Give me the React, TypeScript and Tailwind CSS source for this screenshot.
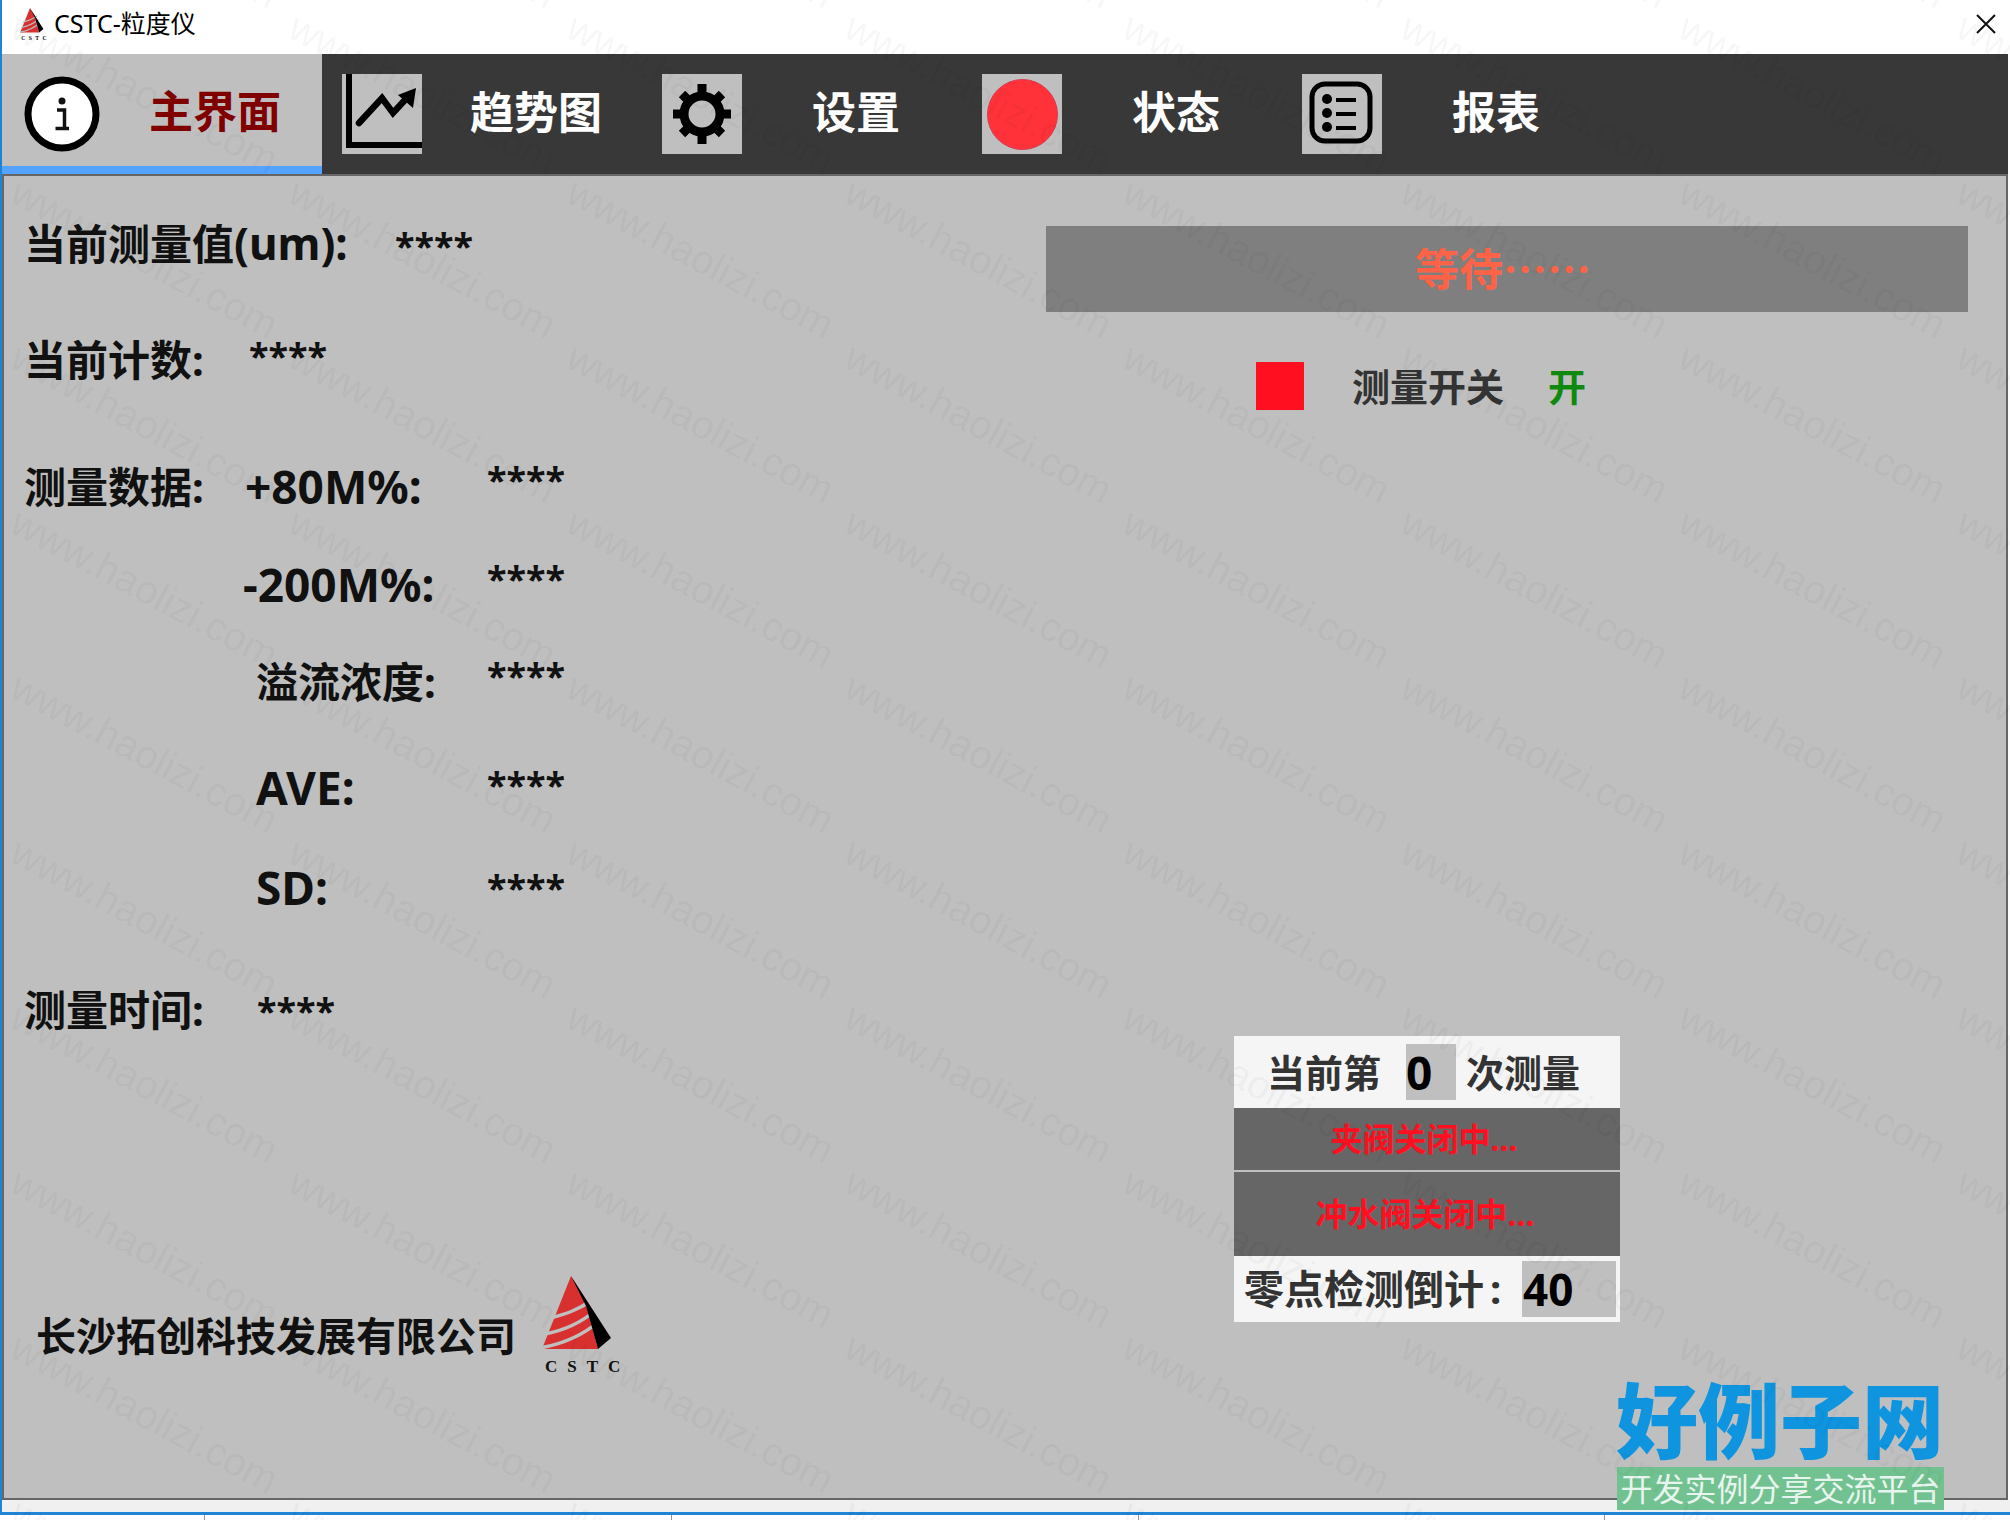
import React from "react";

const tabIconClass = "flex h-20 w-20 shrink-0 items-center justify-center bg-[#bfbfbf]";

function CstcLogo({ className }: { className: string }) {
  return (
    <svg viewBox="0 0 82 98" className={className}>
      <polygon points="29,0 0,73 56,73 42,22" fill="#d8302f" />
      <path d="M8 42 C24 38 36 34 50 24" stroke="#bfbfbf" strokeWidth="3.5" fill="none" />
      <path d="M3 58 C24 54 40 46 54 34" stroke="#bfbfbf" strokeWidth="3.5" fill="none" />
      <path d="M-2 72 C20 68 40 60 56 46" stroke="#bfbfbf" strokeWidth="3.5" fill="none" />
      <polygon points="29,0 69,62 56,73 44,30" fill="#000000" />
      <text x="3" y="96" fontSize="17" fontWeight="700" fontFamily="Liberation Serif, serif" letterSpacing="10" fill="#111111">
        CSTC
      </text>
    </svg>
  );
}

function InfoIcon() {
  return (
    <svg viewBox="0 0 76 76" className="h-[76px] w-[76px]">
      <circle cx="38" cy="38" r="34" fill="#ffffff" stroke="#000000" strokeWidth="7" />
      <circle cx="38" cy="25" r="3.5" fill="#111111" />
      <path d="M33 34 H40.5 V52 M31.5 52.5 H45" stroke="#111111" strokeWidth="3.5" fill="none" />
    </svg>
  );
}

function TrendIcon() {
  return (
    <svg viewBox="0 0 80 80" className="h-20 w-20">
      <path d="M7 0 V71 H80" stroke="#000000" strokeWidth="6" fill="none" />
      <path d="M17 49 L40 24 L51 39 L62 27" stroke="#000000" strokeWidth="6.5" fill="none" strokeLinecap="round" />
      <polygon points="74,14 56,21 71,34" fill="#000000" />
    </svg>
  );
}

function GearIcon() {
  return (
    <svg viewBox="0 0 80 80" className="h-20 w-20">
      <circle cx="40" cy="40" r="18" stroke="#000000" strokeWidth="9" fill="none" />
      <path
        d="M40 10 V22 M40 58 V70 M11 40 H22 M58 40 H69 M20 20 L27 27 M53 53 L60 60 M60 20 L53 27 M27 53 L20 60"
        stroke="#000000"
        strokeWidth="9"
        fill="none"
      />
    </svg>
  );
}

function ListIcon() {
  return (
    <svg viewBox="0 0 80 80" className="h-20 w-20">
      <rect x="10" y="10" width="58" height="57" rx="13" stroke="#000000" strokeWidth="5" fill="none" />
      <circle cx="25" cy="25" r="5" fill="#000000" />
      <circle cx="25" cy="39" r="5" fill="#000000" />
      <circle cx="25" cy="53" r="5" fill="#000000" />
      <path d="M34 26 H54 M34 40 H54 M34 54 H54" stroke="#000000" strokeWidth="4" fill="none" />
    </svg>
  );
}

function Tab({ icon, label, active }: { icon: React.ReactNode; label: string; active?: boolean }) {
  return (
    <div
      className={
        active
          ? "flex h-[120px] w-[320px] items-center bg-[#bfbfbf] border-b-8 border-[#55a3ff] pl-[22px] pt-2"
          : "flex h-[120px] w-[320px] items-center pl-[20px]"
      }
    >
      {icon}
      <div
        className={
          active
            ? "flex-1 pb-[6px] pl-2 text-center text-[44px] font-bold text-[#800000]"
            : "flex-1 pb-1 pl-2 text-center text-[44px] font-bold text-white"
        }
      >
        {label}
      </div>
    </div>
  );
}

function Stars({ className = "" }: { className?: string }) {
  return <span className={"text-[36px] leading-none font-bold text-[#111111] " + className}>****</span>;
}

const rowClass = "flex h-[60px] items-center text-[42px] font-bold text-[#111111]";
const latinClass = "text-[46px]";

export default function App() {
  const marks = Array.from({ length: 99 });
  return (
    <div className="relative h-[1520px] w-[2010px] overflow-hidden bg-white font-['Noto_Sans','Noto_Sans_CJK_SC',sans-serif]">
      <div className="h-[1515px] border-b-[3px] border-l-2 border-[#1f84d6]">
        {/* title bar */}
        <div className="flex h-[54px] items-center justify-between pb-[6px] pl-[18px] pr-[10px]">
          <div className="flex items-center gap-[6px]">
            <CstcLogo className="h-[33px] w-[28px]" />
            <span className="text-[25px] text-black">CSTC-粒度仪</span>
          </div>
          <svg viewBox="0 0 20 20" className="mr-[4px] h-5 w-5">
            <path d="M1 1 L19 19 M19 1 L1 19" stroke="#111111" strokeWidth="2" />
          </svg>
        </div>

        {/* tabs */}
        <div className="mr-[2px] flex h-[120px] bg-[#383838]">
          <Tab active label="主界面" icon={<InfoIcon />} />
          <Tab label="趋势图" icon={<div className={tabIconClass}><TrendIcon /></div>} />
          <Tab label="设置" icon={<div className={tabIconClass}><GearIcon /></div>} />
          <Tab
            label="状态"
            icon={
              <div className={tabIconClass}>
                <div className="h-[71px] w-[71px] rounded-full border border-[#d83a50] bg-[#ff323a]" />
              </div>
            }
          />
          <Tab label="报表" icon={<div className={tabIconClass}><ListIcon /></div>} />
        </div>

        {/* main panel */}
        <div className="mr-[2px] flex h-[1326px] border-2 border-[#666666] bg-[#bfbfbf]">
          <div className="w-[1042px] shrink-0 pt-[37px]">
            <div className={rowClass + " pl-[20px]"}>
              <span className="w-[371px]">
                当前测量值<span className="text-[44px]">(um):</span>
              </span>
              <Stars className="mt-[6px]" />
            </div>
            <div className={rowClass + " mt-[56px] pl-[20px]"}>
              <span className="w-[225px]">当前计数:</span>
              <Stars className="-mt-[6px]" />
            </div>
            <div className={rowClass + " mt-[67px] pl-[20px]"}>
              <span className="w-[221px]">测量数据:</span>
              <span className={latinClass + " w-[242px]"}>+80M%:</span>
              <Stars className="-mt-[12px]" />
            </div>
            <div className={rowClass + " mt-[38px] pl-[239px]"}>
              <span className={latinClass + " w-[244px]"}>-200M%:</span>
              <Stars className="-mt-[10px]" />
            </div>
            <div className={rowClass + " mt-[37px] pl-[252px]"}>
              <span className="w-[231px]">溢流浓度:</span>
              <Stars className="-mt-[10px]" />
            </div>
            <div className={rowClass + " mt-[46px] pl-[252px]"}>
              <span className={latinClass + " w-[231px]"}>AVE:</span>
              <Stars className="-mt-[4px]" />
            </div>
            <div className={rowClass + " mt-[40px] pl-[252px]"}>
              <span className={latinClass + " w-[231px]"}>SD:</span>
              <Stars className="mt-[2px]" />
            </div>
            <div className={rowClass + " mt-[62px] pl-[20px]"}>
              <span className="w-[233px]">测量时间:</span>
              <Stars className="mt-[4px]" />
            </div>
            <div className="mt-[237px] flex h-[98px] items-start pl-[32px]">
              <div className="mt-[30px] h-[60px] w-[506px] text-[40px] leading-[60px] font-bold text-[#111111]">
                长沙拓创科技发展有限公司
              </div>
              <CstcLogo className="h-[98px] w-[82px] shrink-0" />
            </div>
          </div>

          <div className="flex-1 pr-[38px] pt-[50px]">
            <div className="flex h-[86px] items-center justify-center bg-[#7f7f7f] pb-[4px] pr-[8px] font-['Noto_Sans_CJK_SC',sans-serif] text-[44px] font-bold text-[#ff6347]">
              等待……
            </div>
            <div className="mt-[50px] flex h-12 items-center pl-[210px]">
              <div className="h-12 w-12 bg-[#ff0f1f]" />
              <span className="ml-[48px] w-[196px] text-[38px] font-bold text-[#333333]">测量开关</span>
              <span className="text-[38px] font-bold text-[#0f8a0f]">开</span>
            </div>
            <div className="ml-[188px] mt-[626px] w-[386px] text-[38px] font-bold text-[#333333]">
              <div className="flex h-[72px] items-center bg-[#f5f5f5] pl-[33px]">
                <span className="w-[139px]">当前第</span>
                <span className="flex h-14 w-[50px] items-center bg-[#bfbfbf] text-[46px] text-black">0</span>
                <span className="ml-[10px]">次测量</span>
              </div>
              <div className="flex h-[64px] items-center justify-center border-b-2 border-[#bfbfbf] bg-[#666666] pr-[6px] text-[32px] text-[#ff0f1f]">
                夹阀关闭中...
              </div>
              <div className="flex h-[84px] items-center justify-center bg-[#666666] pr-[4px] text-[32px] text-[#ff0f1f]">
                冲水阀关闭中...
              </div>
              <div className="flex h-[66px] items-center bg-[#f5f5f5] pl-[10px] pr-1">
                <span className="w-[278px] text-[40px]">零点检测倒计<span className="ml-[6px]">:</span></span>
                <span className="flex h-14 flex-1 items-center pl-[1px] bg-[#bfbfbf] text-[44px] text-black">40</span>
              </div>
            </div>
          </div>
        </div>
        <div className="h-[12px] bg-[#f0f0f0]" />
      </div>

      {/* bottom ticks */}
      <div className="flex h-[5px] pl-[204px]">
        <div className="h-full w-[467px] border-l border-[#999999]" />
        <div className="h-full w-[467px] border-l border-[#999999]" />
        <div className="h-full w-[466px] border-l border-[#999999]" />
        <div className="h-full w-[100px] border-l border-[#999999]" />
      </div>

      {/* site stamp */}
      <div className="absolute left-[1616px] top-[1372px] w-[328px] text-center text-[82px] leading-[96px] font-black text-[#0f95df]">
        好例子网
      </div>
      <div className="absolute left-[1617px] top-[1467px] flex h-[43px] w-[327px] items-center justify-center bg-[#72c291] text-[32px] text-[#e8f5ee]">
        开发实例分享交流平台
      </div>

      {/* watermark */}
      <div className="pointer-events-none absolute -left-[272px] -top-[155px] grid grid-cols-[repeat(9,278px)] auto-rows-[165px] font-['Liberation_Sans',sans-serif]">
        {marks.map((_, i) => (
          <div key={i} className="flex items-center justify-center">
            <span className="rotate-[28deg] whitespace-nowrap text-[40px] text-black/[0.05]">www.haolizi.com</span>
          </div>
        ))}
      </div>
    </div>
  );
}
